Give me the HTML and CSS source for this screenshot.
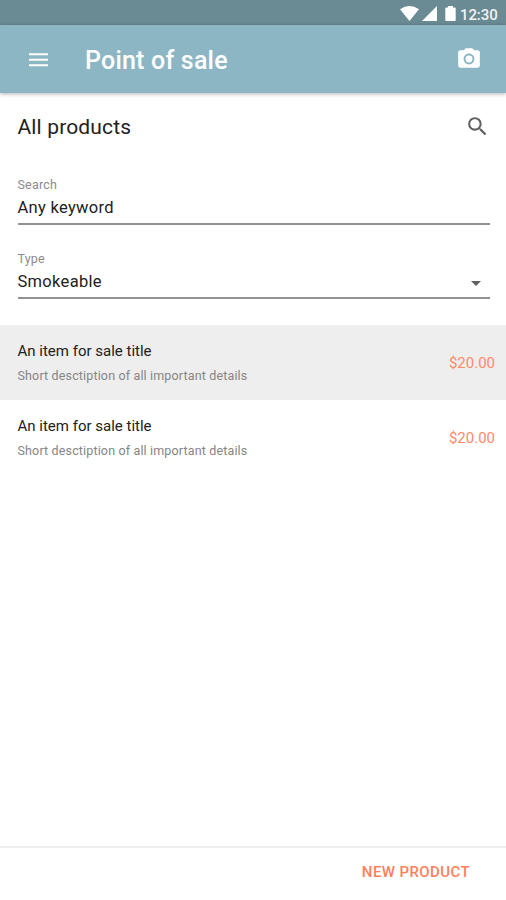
FILE: index.html
```html
<!DOCTYPE html>
<html lang="en">
<head>
<meta charset="utf-8">
<title>Point of sale</title>
<link rel="stylesheet" href="styles.css">
</head>
<body>
<div class="screen">
  <div class="status-bar">
    <svg class="wifi" width="20" height="16" viewBox="0 0 20 16"><path d="M0 3.2Q9.5-3.2 19 3.2L9.5 15z"/></svg>
    <svg class="signal" width="16" height="16" viewBox="0 0 16 16"><path d="M0 15L15 0V15z"/></svg>
    <svg class="battery" width="12" height="16" viewBox="0 0 12 16"><path d="M3 0h5v1.5h1.7q1 0 1 1V14q0 1-1 1H1.300q-1 0-1-1V2.500q0-1 1-1H3z"/></svg>
    <span class="clock">12:30</span>
  </div>
  <header class="app-bar">
    <svg class="menu" width="20" height="14" viewBox="0 0 20 14"><path d="M0 .2h19v2H0zm0 5.600h19v2H0zm0 5.500h19v2H0z"/></svg>
    <h1 class="app-title">Point of sale</h1>
    <svg class="camera" width="26" height="26" viewBox="0 0 24 24"><circle cx="12" cy="12" r="3.200"/><path d="M9 2L7.170 4H4c-1.100 0-2 .9-2 2v12c0 1.100.9 2 2 2h16c1.100 0 2-.9 2-2V6c0-1.100-.9-2-2-2h-3.170L15 2H9zm3 15c-2.760 0-5-2.240-5-5s2.240-5 5-5 5 2.240 5 5-2.240 5-5 5z"/></svg>
  </header>
  <main class="content">
    <div class="section-head">
      <h2 class="section-title">All products</h2>
      <svg class="search" width="25" height="25" viewBox="0 0 24 24"><path d="M15.500 14h-.79l-.28-.27A6.471 6.471 0 0 0 16 9.500 6.500 6.500 0 1 0 9.500 16c1.610 0 3.090-.59 4.230-1.570l.27.28v.79l5 4.990L20.490 19l-4.990-5zm-6 0C7.010 14 5 11.990 5 9.500S7.010 5 9.500 5 14 7.010 14 9.500 11.990 14 9.500 14z"/></svg>
    </div>
    <div class="field">
      <span class="label label-search">Search</span>
      <div class="value"><span class="keyword">Any keyword</span></div>
    </div>
    <div class="field">
      <span class="label label-type">Type</span>
      <div class="value"><span class="type">Smokeable</span><svg class="caret" width="10" height="5" viewBox="0 0 10 5"><path d="M0 0h10L5 5z"/></svg></div>
    </div>
    <ul class="items">
      <li class="item selected">
        <div class="item-text"><span class="item-title">An item for sale title</span><span class="item-desc">Short desctiption of all important details</span></div>
        <span class="price">$20.00</span>
      </li>
      <li class="item">
        <div class="item-text"><span class="item-title">An item for sale title</span><span class="item-desc">Short desctiption of all important details</span></div>
        <span class="price">$20.00</span>
      </li>
    </ul>
  </main>
  <footer class="footer"><span class="new-product">NEW PRODUCT</span></footer>
</div>
</body>
</html>
```
FILE: styles.css
```css
* { box-sizing: border-box; }
body { margin: 0; font-family: Roboto, sans-serif; color: #212121; background: #fff; }
h1, h2, ul { margin: 0; padding: 0; }
svg { display: block; flex: none; }
span { white-space: nowrap; }
.screen { display: flex; flex-direction: column; height: 900px; overflow: hidden; }
.status-bar { height: 25px; flex: none; display: flex; justify-content: flex-end; padding: 6px 8px 0 0; background: #6a8a94; fill: #fff; color: #fff; }
.wifi { margin-right: 2px; }
.signal { margin-right: 7px; }
.battery { margin-right: 3px; }
.clock { width: 38px; font-size: 15px; line-height: 18px; font-weight: 500; letter-spacing: -0.1px; opacity: .9; }
.app-bar { height: 68px; flex: none; display: flex; align-items: center; padding: 0 24px 0 29px; background: #8db6c4; color: #fff; fill: #fff; box-shadow: 0 1px 4px rgba(0, 0, 0, .3); }
.menu { margin-top: 2px; }
.app-title { flex: 1; margin: 4px 0 0 36px; font-size: 25px; line-height: 30px; font-weight: 500; letter-spacing: .2px; }
.content { flex: 1; }
.section-head { height: 77px; display: flex; justify-content: space-between; align-items: flex-start; padding: 19px 16px 0 17.500px; }
.section-title { font-size: 21px; line-height: 30px; font-weight: 400; letter-spacing: .15px; }
.search { margin-top: 2px; fill: #616161; }
.field { height: 74px; margin: 0 16px 0 17.500px; padding-top: 7px; }
.label { display: block; height: 16px; font-size: 12.5px; line-height: 16px; letter-spacing: .2px; color: #8b8b8b; }
.value { height: 32px; display: flex; justify-content: space-between; padding: 5px 9px 0 0; border-bottom: 2px solid #919191; font-size: 16.500px; line-height: 20px; letter-spacing: .3px; }
.caret { margin-top: 9px; fill: #616161; }
.items { list-style: none; margin-top: 7px; }
.item { height: 75px; display: flex; justify-content: space-between; align-items: center; padding: 0 11px 0 17.500px; }
.selected { background: #eee; }
.item-text { display: flex; flex-direction: column; }
.item-title { font-size: 15px; line-height: 25px; padding-top: 1px; margin-bottom: -1px; }
.item-desc { font-size: 12.500px; line-height: 25px; letter-spacing: .15px; color: #858585; }
.price { font-size: 15px; line-height: 20px; color: #ff8a65; }
.footer { height: 54px; flex: none; border-top: 2px solid #eee; padding: 14px 36px 0 0; text-align: right; color: #ff7f5c; font-size: 15px; line-height: 20px; font-weight: 500; letter-spacing: .4px; }
```
